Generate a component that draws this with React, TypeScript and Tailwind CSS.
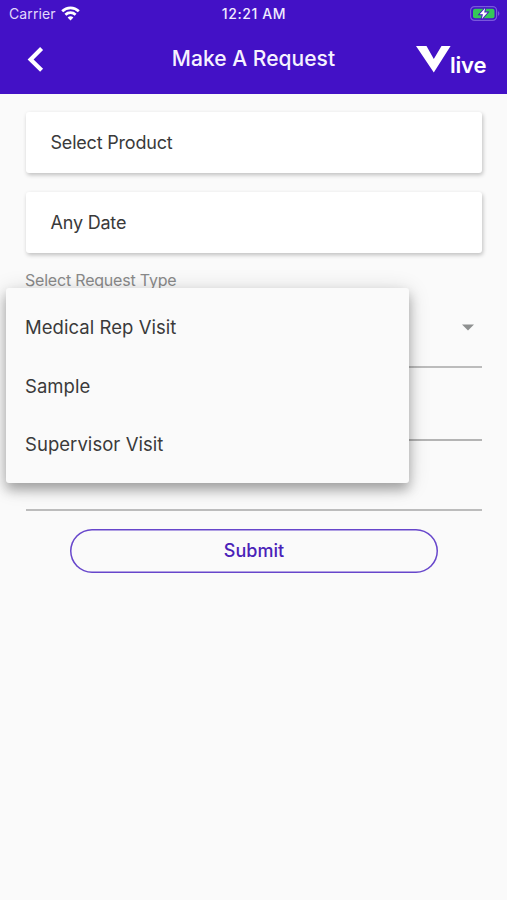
const requestTypes = ['Medical Rep Visit', 'Sample', 'Supervisor Visit']

function StatusBar() {
  return (
    <div className="grid h-[27px] grid-cols-3 items-center pr-[7px] pl-[9px]">
      <div className="flex items-center gap-[6px]">
        <span className="text-[14px] leading-none tracking-[0.1px] text-[#e2d8fb]">Carrier</span>
        <svg className="-ml-px h-[15px] w-[19px]" viewBox="0 0 19 15" fill="none" stroke="#fff" strokeWidth="2.7">
          <path d="M1.2 5.3a11.8 11.8 0 0 1 16.6 0" />
          <path d="M4.4 8.8a7.3 7.3 0 0 1 10.2 0" />
          <path d="M9.5 14.5 6.6 11.6a4.1 4.1 0 0 1 5.8 0Z" fill="#fff" stroke="none" />
        </svg>
      </div>
      <span className="-ml-px text-center text-[14px] leading-none font-medium tracking-[0.6px] whitespace-nowrap text-[#f1ecff]">
        12:21 AM
      </span>
      <svg className="h-[15px] w-[30px] justify-self-end" viewBox="0 0 30 15">
        <rect x="0.6" y="0.6" width="26" height="13.8" rx="4" fill="none" stroke="#7958dc" strokeWidth="1.2" />
        <rect x="3" y="2.8" width="21.5" height="9.4" rx="2" fill="#35c759" />
        <path d="M28 5.2c1.8.7 1.8 3.9 0 4.6Z" fill="#7958dc" />
        <path
          d="M15.2 2 9.6 8.3h3.3L11.8 13l5.8-6.6h-3.4Z"
          fill="#fff"
          stroke="#4311c6"
          strokeWidth="1.8"
          paintOrder="stroke"
        />
      </svg>
    </div>
  )
}

function Logo() {
  return (
    <div className="flex w-[71px] items-start">
      <svg className="mt-px h-[27px] w-[35px] shrink-0" viewBox="0 0 35 27" fill="#fff">
        <path d="M0 0h10.5l7.3 13L25.5 0h9.1L17.8 26.5Z" />
      </svg>
      <span className="-ml-[1px] pt-[8px] text-[22px] leading-[24px] font-semibold tracking-[-0.2px] text-white">
        live
      </span>
    </div>
  )
}

function Header() {
  return (
    <header className="h-[93.5px] bg-[#4311c6]">
      <StatusBar />
      <div className="grid grid-cols-[1fr_auto_1fr] items-start px-[20px] pt-[18px]">
        <svg
          className="mt-[1px] ml-[7px] h-[26px] w-[17px]"
          viewBox="0 0 17 26"
          fill="none"
          stroke="#fff"
          strokeWidth="4.2"
        >
          <path d="M14.6 2.6 3.6 13.4l11 10.8" />
        </svg>
        <h1 className="mt-px text-[21px] leading-[26px] font-medium tracking-[0.03px] text-[#f6f2ff]">
          Make A Request
        </h1>
        <div className="justify-self-end">
          <Logo />
        </div>
      </div>
    </header>
  )
}

function PickerCard({ label }: { label: string }) {
  return (
    <button className="flex h-[61px] w-full items-center rounded-[3px] bg-white pl-[24.5px] text-left text-[18px] tracking-[-0.2px] text-[#3a3a3a] shadow-[1px_2px_4px_rgba(0,0,0,0.24)]">
      {label}
    </button>
  )
}

function RequestTypeMenu() {
  return (
    <ul className="absolute -top-px -left-[20px] flex h-[195px] w-[403px] flex-col rounded-[3px] bg-[#fafafa] pt-[11px] pb-[9px] shadow-[0_7px_12px_rgba(0,0,0,0.28),0_3px_22px_rgba(0,0,0,0.16)]">
      {requestTypes.map((type) => (
        <li key={type} className="flex flex-1 items-center pl-[19px] text-[18.5px] tracking-[0.05px] text-[#3a3a3a]">
          {type}
        </li>
      ))}
    </ul>
  )
}

export default function App() {
  return (
    <div className="min-h-[900px] w-full bg-[#fafafa] font-['Inter',sans-serif]">
      <Header />
      <main className="pt-[18.5px] pr-[25px] pl-[26px]">
        <div className="flex flex-col gap-[19px]">
          <PickerCard label="Select Product" />
          <PickerCard label="Any Date" />
        </div>

        <label className="mt-[18px] -ml-px block text-[16px] leading-[18px] tracking-[-0.2px] text-[#8a8a8a]">
          Select Request Type
        </label>
        <div className="relative z-10 h-0">
          <RequestTypeMenu />
        </div>
        <div className="flex h-[79px] items-center justify-end border-b-2 border-[#bcbcbc] pr-[8px]">
          <svg className="h-[7px] w-[12px]" viewBox="0 0 12 7" fill="#8e9090">
            <path d="M0 .5h12L6 6.5Z" />
          </svg>
        </div>
        <div className="h-[73px] border-b-2 border-[#b4b4b4]" />
        <div className="h-[70px] border-b-2 border-[#bcbcbc]" />

        <button className="mt-[17.5px] ml-[44px] block h-[44.5px] w-[368px] rounded-full text-[18px] font-medium tracking-[0.05px] text-[#4a22b8] shadow-[inset_0_0_0_1.5px_#6746cb]">
          Submit
        </button>
      </main>
    </div>
  )
}
